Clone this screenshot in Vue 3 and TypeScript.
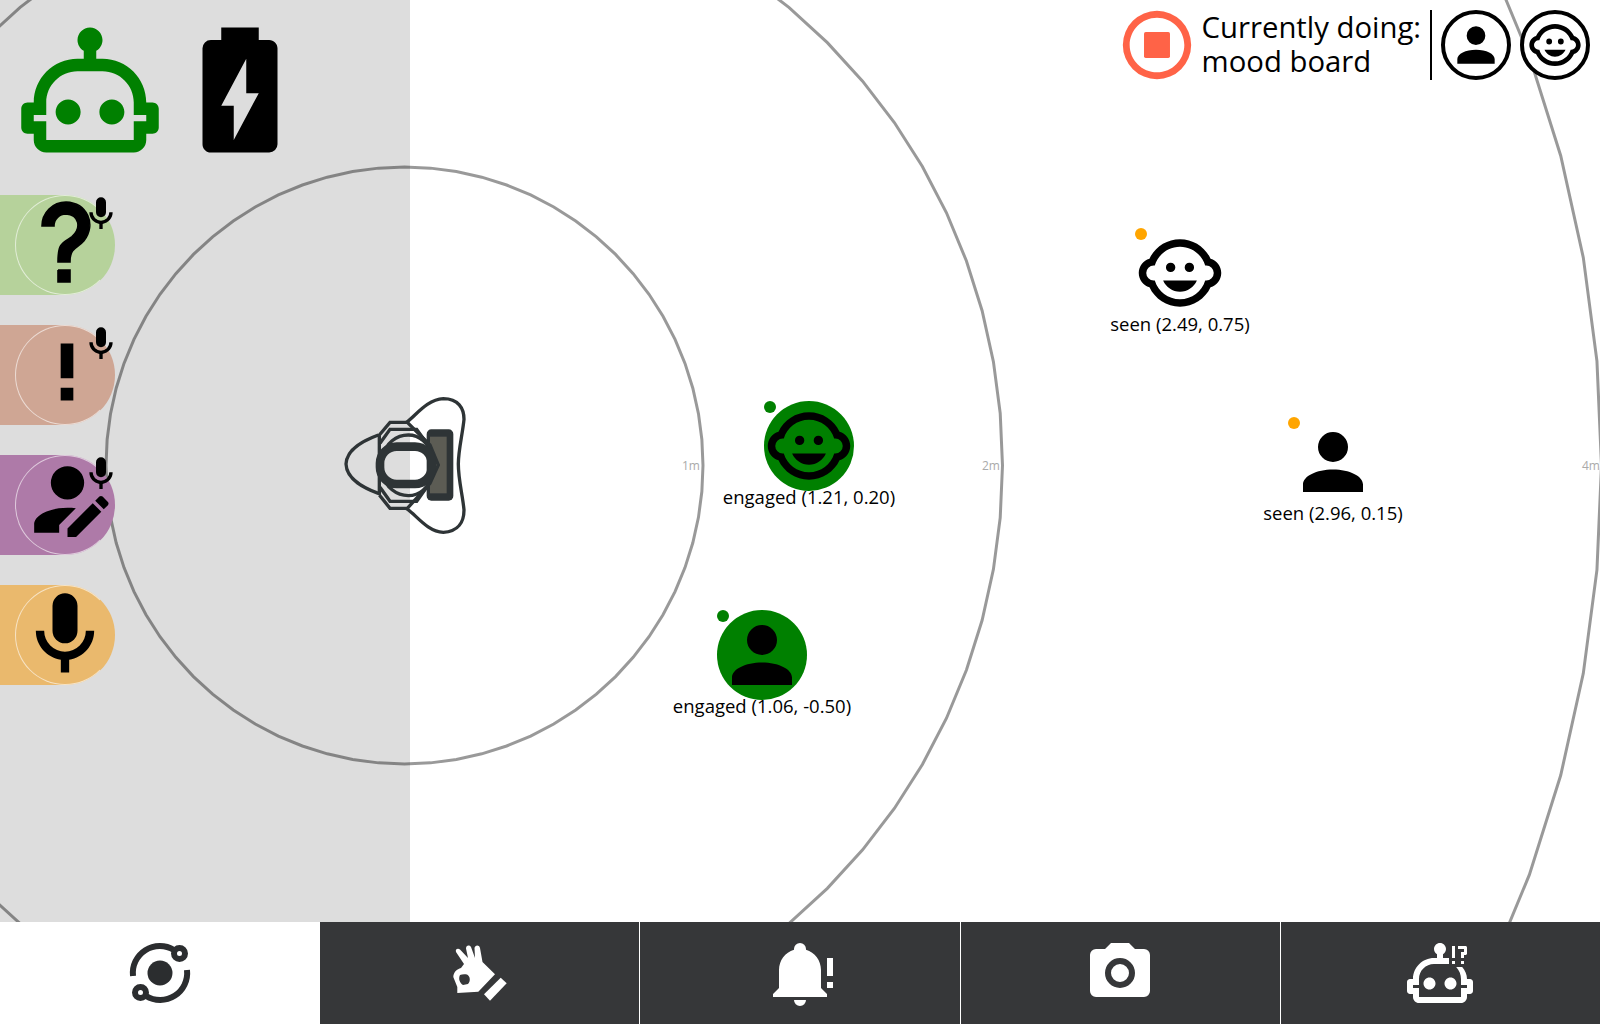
<template>
  <div class="app">
    <main class="map">
      <aside class="sidebar">
        <div class="side-content">
          <div class="status-row">
            <svg class="status-icon robot-ok" viewBox="0 0 24 24"><path :d="icons.robot" /></svg>
            <svg class="status-icon" viewBox="0 0 24 24"><path :d="icons.battery" /></svg>
          </div>
          <div class="pills">
            <div v-for="pill in pills" :key="pill.name" class="pill" :class="pill.name">
              <div class="pill-circle">
                <svg class="pill-icon" viewBox="0 0 24 24"><path :d="pill.icon" /></svg>
              </div>
              <svg v-if="pill.mic" class="pill-mic" viewBox="0 0 24 24"><path :d="icons.mic" /></svg>
            </div>
          </div>
        </div>
      </aside>

      <svg class="rings" width="1600" height="922">
        <polygon v-for="ring in rings" :key="ring" :points="ringPoints(ring)" class="ring" />
      </svg>
      <span v-for="label in rangeLabels" :key="label.text" class="range-label" :style="{ left: label.x + 'px' }">{{ label.text }}</span>

      <svg class="robot" viewBox="0 0 480 480">
        <rect x="290" y="148" width="80" height="214" rx="14" class="tablet" />
        <rect x="300" y="170" width="50" height="170" class="screen" />
        <g class="robot-lines">
          <path d="M145 165C105 180 50 205 48 252C50 300 105 325 145 340" />
          <path d="M228 128C255 110 290 58 340 56C385 56 402 85 402 118C398 160 385 210 385 252C385 300 398 345 402 390C402 425 385 455 340 457C290 455 255 400 228 385" />
          <path d="M148 345V165L180 127H232L300 195L325 255L300 310L232 385H180L148 345" />
          <path d="M150 190L180 148H260L290 190M150 322L180 364H260L290 322" />
          <path d="M160 230C165 190 200 165 235 165C270 165 295 190 310 230M160 282C165 322 200 347 235 347C270 347 295 322 310 282" />
        </g>
        <rect x="150" y="200" width="155" height="112" rx="50" class="robot-head" />
      </svg>

      <div
        v-for="person in people"
        :key="person.label"
        class="person"
        :class="person.state"
        :style="{ left: person.x - 45 + 'px', top: person.y - 45 + 'px' }"
      >
        <span class="person-dot"></span>
        <svg viewBox="0 0 24 24"><path :d="person.kid ? icons.baby : icons.account" /></svg>
        <span class="person-label">{{ person.label }}</span>
      </div>

      <div class="activity">
        <svg class="stop" viewBox="0 0 24 24">
          <path d="M12 2A10 10 0 0 0 2 12A10 10 0 0 0 12 22A10 10 0 0 0 22 12A10 10 0 0 0 12 2M12 4C16.41 4 20 7.59 20 12C20 16.41 16.41 20 12 20C7.59 20 4 16.41 4 12C4 7.59 7.59 4 12 4Z" />
          <rect x="8.2" y="8.2" width="7.6" height="7.6" rx="0.5" />
        </svg>
        <div class="activity-text">
          <div>Currently doing:</div>
          <div>mood board</div>
        </div>
        <div class="activity-modes">
          <div class="mode"><svg viewBox="0 0 24 24"><path :d="icons.account" /></svg></div>
          <div class="mode"><svg viewBox="0 0 24 24"><path :d="icons.baby" /></svg></div>
        </div>
      </div>
    </main>

    <nav class="tabs">
      <div class="tab active">
        <svg viewBox="0 0 72 72">
          <circle cx="36" cy="36" r="12.5" class="solid" />
          <path class="orbit" d="M9 39A27 27 0 0 1 50 13" />
          <path class="orbit" d="M63 33A27 27 0 0 1 22 59" />
          <circle cx="55.5" cy="16.5" r="5.5" class="orbit" />
          <circle cx="16.5" cy="55.5" r="5.5" class="orbit" />
        </svg>
      </div>
      <div class="tab">
        <svg viewBox="0 0 72 72">
          <path class="solid" fill-rule="evenodd" d="M12 15C11 12 14 11 16 12.5L24 21L22 11.5C22 8.5 25 7.5 27 10L31 21L30.5 11C31 8 35 7.5 36 11L38.5 25L51 37.3L34.3 54.7L13.3 56V50L9.3 40C9.5 35 13 32 17 31L20 27ZM16 38C14 42 16 46 19 48L24 47C27 44 26 39 23 37.5C21 37 18 37 16 38Z" />
          <path class="solid" d="M56.7 40.7L62.7 46.3L46 63.7L40 57.3Z" />
        </svg>
      </div>
      <div class="tab">
        <svg viewBox="0 0 24 24"><path class="solid" :d="icons.bell" /></svg>
      </div>
      <div class="tab">
        <svg viewBox="0 0 24 24"><path class="solid" :d="icons.camera" /></svg>
      </div>
      <div class="tab">
        <svg viewBox="0 0 24 24"><path class="solid" :d="icons.robotConfused" /></svg>
      </div>
    </nav>
  </div>
</template>

<script setup lang="ts">
const icons = {
  robot:
    "M17.5 15.5C17.5 16.61 16.61 17.5 15.5 17.5S13.5 16.61 13.5 15.5 14.4 13.5 15.5 13.5 17.5 14.4 17.5 15.5M8.5 13.5C7.4 13.5 6.5 14.4 6.5 15.5S7.4 17.5 8.5 17.5 10.5 16.61 10.5 15.5 9.61 13.5 8.5 13.5M23 15V18C23 18.55 22.55 19 22 19H21V20C21 21.11 20.11 22 19 22H5C3.9 22 3 21.11 3 20V19H2C1.45 19 1 18.55 1 18V15C1 14.45 1.45 14 2 14H3C3 10.13 6.13 7 10 7H11V5.73C10.4 5.39 10 4.74 10 4C10 2.9 10.9 2 12 2S14 2.9 14 4C14 4.74 13.6 5.39 13 5.73V7H14C17.87 7 21 10.13 21 14H22C22.55 14 23 14.45 23 15M21 16H19V14C19 11.24 16.76 9 14 9H10C7.24 9 5 11.24 5 14V16H3V17H5V20H19V17H21V16Z",
  battery:
    "M16.67 4H15V2H9V4H7.33A1.33 1.33 0 0 0 6 5.33V20.67C6 21.4 6.6 22 7.33 22H16.67A1.33 1.33 0 0 0 18 20.67V5.33C18 4.6 17.4 4 16.67 4M11 20V14.5H9L13 7V12.5H15",
  help: "M10 19H13V22H10V19M12 2C17.35 2.22 19.68 7.62 16.5 11.67C15.67 12.67 14.33 13.33 13.67 14.17C13 15 13 16 13 17H10C10 15.33 10 13.92 10.67 12.92C11.33 11.92 12.67 11.33 13.5 10.67C15.92 8.43 15.32 5.26 12 5A3 3 0 0 0 9 8H6A6 6 0 0 1 12 2Z",
  exclamation: "M10 3H14V14H10V3M10 21V17H14V21H10Z",
  accountEdit:
    "M21.7 13.35L20.7 14.35L18.65 12.3L19.65 11.3C19.86 11.09 20.21 11.09 20.42 11.3L21.7 12.58C21.91 12.79 21.91 13.14 21.7 13.35M12 18.94L18.06 12.88L20.11 14.93L14.06 21H12V18.94M12 14C7.58 14 4 15.79 4 18V20H10V18.11L14 14.11C13.34 14.03 12.67 14 12 14M12 4A4 4 0 0 0 8 8A4 4 0 0 0 12 12A4 4 0 0 0 16 8A4 4 0 0 0 12 4Z",
  mic: "M12 2A3 3 0 0 1 15 5V11A3 3 0 0 1 12 14A3 3 0 0 1 9 11V5A3 3 0 0 1 12 2M19 11C19 14.53 16.39 17.44 13 17.93V21H11V17.93C7.61 17.44 5 14.53 5 11H7A5 5 0 0 0 12 16A5 5 0 0 0 17 11H19Z",
  account:
    "M12 4A4 4 0 0 1 16 8A4 4 0 0 1 12 12A4 4 0 0 1 8 8A4 4 0 0 1 12 4M12 14C16.42 14 20 15.79 20 18V20H4V18C4 15.79 7.58 14 12 14Z",
  baby: "M14.5 9.25A1.25 1.25 0 0 1 15.75 10.5A1.25 1.25 0 0 1 14.5 11.75A1.25 1.25 0 0 1 13.25 10.5A1.25 1.25 0 0 1 14.5 9.25M9.5 9.25A1.25 1.25 0 0 1 10.75 10.5A1.25 1.25 0 0 1 9.5 11.75A1.25 1.25 0 0 1 8.25 10.5A1.25 1.25 0 0 1 9.5 9.25M7.5 14H16.5C15.74 15.77 14 17 12 17C10 17 8.26 15.77 7.5 14M1 12C1 10.19 2.2 8.66 3.86 8.17C5.29 5.11 8.4 3 12 3C15.6 3 18.71 5.11 20.15 8.17C21.8 8.66 23 10.19 23 12C23 13.81 21.8 15.34 20.15 15.83C18.71 18.89 15.6 21 12 21C8.4 21 5.29 18.89 3.86 15.83C2.2 15.34 1 13.81 1 12M12 5C8.82 5 6.14 7.12 5.28 10H5A2 2 0 0 0 3 12A2 2 0 0 0 5 14H5.28C6.14 16.88 8.82 19 12 19C15.18 19 17.86 16.88 18.72 14H19A2 2 0 0 0 21 12A2 2 0 0 0 19 10H18.72C17.86 7.12 15.18 5 12 5Z",
  bell: "M21 7H23V13H21V7M21 15H23V17H21V15M21 19V20H3V19L5 17V11C5 7.9 7.03 5.17 10 4.29V4A2 2 0 0 1 12 2A2 2 0 0 1 14 4V4.29C16.97 5.17 19 7.9 19 11V17L21 19M14 21A2 2 0 0 1 12 23A2 2 0 0 1 10 21",
  camera:
    "M4 4H7L9 2H15L17 4H20A2 2 0 0 1 22 6V18A2 2 0 0 1 20 20H4A2 2 0 0 1 2 18V6A2 2 0 0 1 4 4M12 7A5 5 0 0 0 7 12A5 5 0 0 0 12 17A5 5 0 0 0 17 12A5 5 0 0 0 12 7M12 9A3 3 0 0 1 15 12A3 3 0 0 1 12 15A3 3 0 0 1 9 12A3 3 0 0 1 12 9Z",
  robotConfused:
    "M20 4H18V3H20.5C20.78 3 21 3.22 21 3.5V5.5C21 5.78 20.78 6 20.5 6H20V7H19V5H20V4M19 9H20V8H19V9M17 3H16V7H17V3M17 8H16V9H17V8M17.5 15.5C17.5 16.61 16.61 17.5 15.5 17.5S13.5 16.61 13.5 15.5 14.4 13.5 15.5 13.5 17.5 14.4 17.5 15.5M8.5 13.5C7.4 13.5 6.5 14.4 6.5 15.5S7.4 17.5 8.5 17.5 10.5 16.61 10.5 15.5 9.61 13.5 8.5 13.5M23 15V18C23 18.55 22.55 19 22 19H21V20C21 21.11 20.11 22 19 22H5C3.9 22 3 21.11 3 20V19H2C1.45 19 1 18.55 1 18V15C1 14.45 1.45 14 2 14H3C3 10.13 6.13 7 10 7H11V5.73C10.4 5.39 10 4.74 10 4C10 2.9 10.9 2 12 2S14 2.9 14 4C14 4.74 13.6 5.39 13 5.73V7H15V9H10C7.24 9 5 11.24 5 14V16H3V17H5V20H19V17H21V16H19V14C19 12.5 18.4 11.1 17.4 10H19.4C20.4 11.2 21 12.5 21 14H22C22.55 14 23 14.45 23 15Z",
};

const pills = [
  { name: "ask", icon: icons.help, mic: true },
  { name: "say", icon: icons.exclamation, mic: true },
  { name: "edit", icon: icons.accountEdit, mic: true },
  { name: "listen", icon: icons.mic, mic: false },
];

const centerX = 404.5;
const centerY = 465.5;
const rings = [298.5, 598, 1197];

const ringPoints = (radius: number) => {
  const pts: string[] = [];
  for (let deg = 0; deg < 360; deg += 5) {
    const rad = (deg * Math.PI) / 180;
    pts.push(`${centerX + radius * Math.cos(rad)},${centerY + radius * Math.sin(rad)}`);
  }
  return pts.join(" ");
};

const rangeLabels = [
  { text: "1m", x: 682 },
  { text: "2m", x: 982 },
  { text: "4m", x: 1582 },
];

const people = [
  { label: "engaged (1.21, 0.20)", x: 809, y: 446, state: "engaged", kid: true },
  { label: "engaged (1.06, -0.50)", x: 762, y: 655, state: "engaged", kid: false },
  { label: "seen (2.49, 0.75)", x: 1180, y: 273, state: "seen", kid: true },
  { label: "seen (2.96, 0.15)", x: 1333, y: 462, state: "seen", kid: false },
];
</script>

<style>
html,
body {
  margin: 0;
  background: #fff;
}
</style>

<style scoped>
.app {
  width: 1600px;
  height: 1024px;
  display: flex;
  flex-direction: column;
  overflow: hidden;
  font-family: "Open Sans", "Noto Sans", sans-serif;
  color: #000;
}

.map {
  position: relative;
  flex: 1;
  overflow: hidden;
  background: #fff;
}

.sidebar {
  width: 410px;
  height: 100%;
  background-color: #ddd;
}

.side-content {
  position: relative;
  z-index: 2;
}

.status-row {
  display: flex;
  padding: 15px 0 0 15px;
}

.status-icon {
  width: 150px;
  height: 150px;
}

.robot-ok {
  fill: green;
}

.pills {
  display: flex;
  flex-direction: column;
  gap: 30px;
  margin-top: 30px;
}

.pill {
  position: relative;
  width: 115px;
  height: 100px;
  border-radius: 0 50px 50px 0;
}

.pill-circle {
  position: absolute;
  left: 15px;
  top: 0;
  width: 100px;
  height: 100px;
  box-sizing: border-box;
  border: 1px solid rgba(255, 255, 255, 0.6);
  border-right-color: transparent;
  border-radius: 50%;
  display: flex;
  align-items: center;
  justify-content: center;
}

.pill-mic {
  position: absolute;
  left: 81px;
  top: -1px;
  width: 40px;
  height: 40px;
}

.ask {
  background: #b6d29b;
}

.say {
  background: #cfa694;
}

.edit {
  background: #ae7aa8;
}

.listen {
  background: #eab96d;
}

.pill-icon {
  flex: none;
  width: 100px;
  height: 100px;
}

.ask .pill-icon {
  width: 96px;
  height: 96px;
  stroke: #000;
  stroke-width: 0.4;
  transform: translate(1px, -3px);
}

.say .pill-icon {
  width: 76px;
  height: 76px;
  transform: translate(2px, -3px);
}

.edit .pill-icon {
  transform: translate(2.5px, -5.5px);
}

.rings {
  position: absolute;
  left: 0;
  top: 0;
  z-index: 1;
}

.ring {
  fill: none;
  stroke: #000;
  stroke-opacity: 0.4;
  stroke-width: 3;
}

.range-label {
  position: absolute;
  top: 458px;
  z-index: 1;
  font-size: 12px;
  line-height: 16px;
  color: #aaa;
}

.robot {
  position: absolute;
  left: 330px;
  top: 380px;
  z-index: 1;
  width: 160px;
  height: 160px;
}

.tablet {
  fill: #2e3436;
}

.screen {
  fill: #5c5c54;
}

.robot-lines {
  fill: none;
  stroke: #2e3436;
  stroke-width: 10;
}

.robot-head {
  fill: none;
  stroke: #2e3436;
  stroke-width: 26;
}

.person {
  position: absolute;
  z-index: 3;
  width: 90px;
  height: 90px;
  border-radius: 50%;
}

.person svg {
  display: block;
  width: 90px;
  height: 90px;
}

.person.engaged {
  background: green;
}

.person-dot {
  position: absolute;
  left: 0;
  top: 0;
  width: 12px;
  height: 12px;
  border-radius: 50%;
}

.engaged .person-dot {
  background: green;
}

.seen .person-dot {
  background: orange;
}

.person-label {
  position: absolute;
  left: 50%;
  top: 84px;
  transform: translateX(-50%);
  white-space: nowrap;
  font-size: 18.5px;
  line-height: 24px;
}

.activity {
  position: absolute;
  right: 10px;
  top: 10px;
  z-index: 4;
  display: flex;
  align-items: center;
}

.stop {
  width: 82px;
  height: 82px;
  margin: -6px 0;
  fill: tomato;
}

.activity-text {
  margin-left: 4px;
  padding: 0 9px 2px 0;
  font-size: 29.3px;
  line-height: 34px;
  white-space: nowrap;
}

.activity-modes {
  display: flex;
  gap: 9px;
  height: 70px;
  padding-left: 9px;
  border-left: 2px solid #000;
}

.mode {
  width: 70px;
  height: 70px;
  box-sizing: border-box;
  border: 4px solid #000;
  border-radius: 50%;
  background: #fff;
  display: flex;
  align-items: center;
  justify-content: center;
}

.mode svg {
  width: 56px;
  height: 56px;
}

.tabs {
  display: flex;
  height: 102px;
  background: #363739;
}

.tab {
  flex: 1;
  display: flex;
  align-items: center;
  justify-content: center;
  box-sizing: border-box;
  border-right: 1px solid #fff;
}

.tab:last-child {
  border-right: none;
}

.tab svg {
  width: 72px;
  height: 72px;
}

.solid {
  fill: #fff;
}

.tab.active {
  background: #fff;
}

.tab.active .solid {
  fill: #2b2d2f;
}

.orbit {
  fill: none;
  stroke: #2b2d2f;
  stroke-width: 6;
}
</style>
